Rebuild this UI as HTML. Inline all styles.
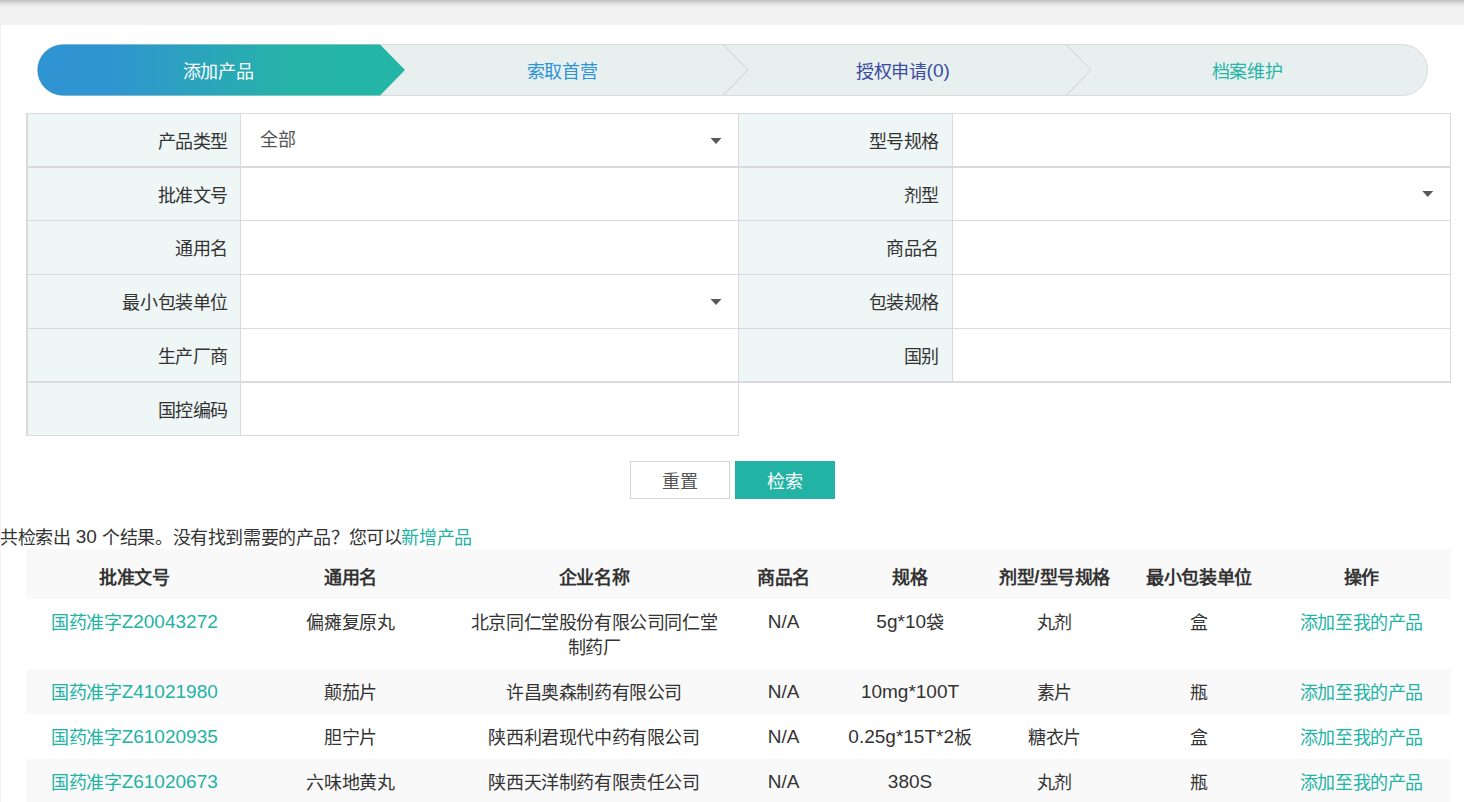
<!DOCTYPE html>
<html lang="zh-CN">
<head>
<meta charset="utf-8">
<style>
*{box-sizing:border-box;margin:0;padding:0}
html,body{width:1464px;height:802px;overflow:hidden}
body{background:#f2f2f2;font-family:"Liberation Sans",sans-serif;color:#333;position:relative;letter-spacing:-0.4px}
.l{letter-spacing:0;font-size:19px;line-height:0;position:relative;top:-1px}
.topshadow{position:absolute;left:0;top:0;width:1464px;height:8px;background:linear-gradient(#c3c3c3 0.5px,#cdcdcd 1.5px,#d7d7d7 2.5px,#e0e0e0 3.5px,#e6e6e6 4.5px,#ececec 5.5px,#efefef 6.5px,#f2f2f2 7.5px)}
.panel{position:absolute;left:1px;top:25px;width:1463px;height:777px;background:#fff}
.abs{position:absolute}
.steps{position:absolute;left:0;top:0}
.st{position:absolute;height:28px;line-height:28px;font-size:18px;text-align:center;white-space:nowrap}
.lbg{position:absolute;background:#eff6f6}
.flab{position:absolute;text-align:right;font-size:18px;color:#333;white-space:nowrap}
.tri{position:absolute;width:0;height:0;border-left:5.5px solid transparent;border-right:5.5px solid transparent;border-top:7px solid #555}
.btn{position:absolute;top:461px;width:100px;height:38px;text-align:center;font-size:18px}
.txt{position:absolute;white-space:nowrap}
.th{position:absolute;text-align:center;font-size:18px;font-weight:bold;line-height:26px;color:#333;white-space:nowrap}
.td{position:absolute;text-align:center;font-size:18px;line-height:25px;color:#333;white-space:nowrap}
.link{color:#22b3a5}
</style>
</head>
<body>
<div class="topshadow"></div>
<div class="panel"></div>
<svg class="steps" width="1464" height="110" viewBox="0 0 1464 110">
  <defs>
    <linearGradient id="g1" gradientUnits="userSpaceOnUse" x1="37" x2="405" y1="0" y2="0">
      <stop offset="0" stop-color="#2f94d2"/>
      <stop offset="0.2" stop-color="#2f95d0"/>
      <stop offset="0.7" stop-color="#25b4a7"/>
      <stop offset="1" stop-color="#24b5a6"/>
    </linearGradient>
  </defs>
  <rect x="37.5" y="44.5" width="1390" height="51" rx="25.5" ry="25.5" fill="#e7f0ef" stroke="#dcdada" stroke-width="1"/>
  <path d="M63,44.5 H380 L405,70 L380,95.5 H63 A25.5,25.5 0 0 1 63,44.5 Z" fill="url(#g1)"/>
  <polyline points="723,44.5 748,70 723,95.5" fill="none" stroke="#dcdada" stroke-width="1.2"/>
  <polyline points="1066,44.5 1091,70 1066,95.5" fill="none" stroke="#dcdada" stroke-width="1.2"/>
</svg>

<div class="st" style="left:168px;top:58px;width:100px;color:#fff">添加产品</div>
<div class="st" style="left:512px;top:58px;width:100px;color:#2e94d6">索取首营</div>
<div class="st" style="left:843px;top:58px;width:120px;color:#3c4aa0">授权申请<span class="l">(0)</span></div>
<div class="st" style="left:1197px;top:58px;width:100px;color:#26b5a5">档案维护</div>
<div class="lbg" style="left:27px;top:113px;width:213px;height:53px"></div>
<div class="lbg" style="left:738px;top:113px;width:214px;height:53px"></div>
<div class="lbg" style="left:27px;top:167px;width:213px;height:53px"></div>
<div class="lbg" style="left:738px;top:167px;width:214px;height:53px"></div>
<div class="lbg" style="left:27px;top:220px;width:213px;height:54px"></div>
<div class="lbg" style="left:738px;top:220px;width:214px;height:54px"></div>
<div class="lbg" style="left:27px;top:274px;width:213px;height:54px"></div>
<div class="lbg" style="left:738px;top:274px;width:214px;height:54px"></div>
<div class="lbg" style="left:27px;top:328px;width:213px;height:53px"></div>
<div class="lbg" style="left:738px;top:328px;width:214px;height:53px"></div>
<div class="lbg" style="left:27px;top:382px;width:213px;height:53px"></div>
<div class="abs" style="left:26px;top:113px;width:1425px;height:1px;background:#dadada"></div>
<div class="abs" style="left:26px;top:166px;width:1425px;height:1px;background:#dadada"></div>
<div class="abs" style="left:26px;top:167px;width:1425px;height:1px;background:#dadada"></div>
<div class="abs" style="left:26px;top:220px;width:1425px;height:1px;background:#dadada"></div>
<div class="abs" style="left:26px;top:274px;width:1425px;height:1px;background:#dadada"></div>
<div class="abs" style="left:26px;top:328px;width:1425px;height:1px;background:#dadada"></div>
<div class="abs" style="left:26px;top:381px;width:1425px;height:1px;background:#dadada"></div>
<div class="abs" style="left:26px;top:382px;width:1425px;height:1px;background:#dadada"></div>
<div class="abs" style="left:26px;top:435px;width:713px;height:1px;background:#dadada"></div>
<div class="abs" style="left:26px;top:113px;width:1px;height:323px;background:#dadada"></div>
<div class="abs" style="left:27px;top:113px;width:1px;height:323px;background:#dadada"></div>
<div class="abs" style="left:240px;top:113px;width:1px;height:323px;background:#dadada"></div>
<div class="abs" style="left:738px;top:113px;width:1px;height:323px;background:#dadada"></div>
<div class="abs" style="left:952px;top:113px;width:1px;height:269px;background:#dadada"></div>
<div class="abs" style="left:1450px;top:113px;width:1px;height:270px;background:#dadada"></div>
<div class="flab" style="left:28px;top:116px;width:200px;height:52px;line-height:52px">产品类型</div>
<div class="flab" style="left:739px;top:116px;width:200px;height:52px;line-height:52px">型号规格</div>
<div class="flab" style="left:28px;top:170px;width:200px;height:52px;line-height:52px">批准文号</div>
<div class="flab" style="left:739px;top:170px;width:200px;height:52px;line-height:52px">剂型</div>
<div class="flab" style="left:28px;top:223px;width:200px;height:53px;line-height:53px">通用名</div>
<div class="flab" style="left:739px;top:223px;width:200px;height:53px;line-height:53px">商品名</div>
<div class="flab" style="left:28px;top:277px;width:200px;height:53px;line-height:53px">最小包装单位</div>
<div class="flab" style="left:739px;top:277px;width:200px;height:53px;line-height:53px">包装规格</div>
<div class="flab" style="left:28px;top:331px;width:200px;height:52px;line-height:52px">生产厂商</div>
<div class="flab" style="left:739px;top:331px;width:200px;height:52px;line-height:52px">国别</div>
<div class="flab" style="left:28px;top:385px;width:200px;height:52px;line-height:52px">国控编码</div>
<div class="flab" style="left:260px;top:114px;width:200px;height:52px;line-height:52px;text-align:left;color:#555">全部</div>
<svg class="abs" style="left:0;top:0" width="1464" height="320"><polygon points="710.5,138 721.5,138 716,144" fill="#595959"/><polygon points="1422.3,191 1433.3,191 1427.8,197" fill="#595959"/><polygon points="710.5,299 721.5,299 716,305" fill="#595959"/></svg>
<div class="btn" style="left:630px;border:1px solid #d5d5d5;background:#fff;color:#555;line-height:41px">重置</div>
<div class="btn" style="left:735px;background:#22b3a5;color:#fff;line-height:43px">检索</div>
<div class="txt" style="left:0;top:525px;font-size:18px;line-height:26px;color:#333">共检索出<span class="l"> 30 </span>个结果。没有找到需要的产品？您可以<span style="color:#22b3a5">新增产品</span></div>
<div class="abs" style="left:26px;top:549px;width:1425px;height:50px;background:#f9f9f9"></div>
<div class="abs" style="left:26px;top:669px;width:1425px;height:45px;background:#f9f9f9"></div>
<div class="abs" style="left:26px;top:759px;width:1425px;height:45px;background:#f9f9f9"></div>
<div class="th" style="left:26px;top:565px;width:217px">批准文号</div>
<div class="th" style="left:243px;top:565px;width:215px">通用名</div>
<div class="th" style="left:458px;top:565px;width:272px">企业名称</div>
<div class="th" style="left:730px;top:565px;width:107px">商品名</div>
<div class="th" style="left:837px;top:565px;width:146px">规格</div>
<div class="th" style="left:983px;top:565px;width:143px">剂型<span class="l">/</span>型号规格</div>
<div class="th" style="left:1126px;top:565px;width:146px">最小包装单位</div>
<div class="th" style="left:1272px;top:565px;width:179px">操作</div>
<div class="td link" style="left:26px;top:611px;width:217px">国药准字<span class="l">Z20043272</span></div>
<div class="td" style="left:243px;top:611px;width:215px">偏瘫复原丸</div>
<div class="td" style="left:458px;top:611px;width:272px">北京同仁堂股份有限公司同仁堂<br>制药厂</div>
<div class="td" style="left:730px;top:611px;width:107px"><span class="l">N/A</span></div>
<div class="td" style="left:837px;top:611px;width:146px"><span class="l">5g*10</span>袋</div>
<div class="td" style="left:983px;top:611px;width:143px">丸剂</div>
<div class="td" style="left:1126px;top:611px;width:146px">盒</div>
<div class="td link" style="left:1272px;top:611px;width:179px">添加至我的产品</div>
<div class="td link" style="left:26px;top:681px;width:217px">国药准字<span class="l">Z41021980</span></div>
<div class="td" style="left:243px;top:681px;width:215px">颠茄片</div>
<div class="td" style="left:458px;top:681px;width:272px">许昌奥森制药有限公司</div>
<div class="td" style="left:730px;top:681px;width:107px"><span class="l">N/A</span></div>
<div class="td" style="left:837px;top:681px;width:146px"><span class="l">10mg*100T</span></div>
<div class="td" style="left:983px;top:681px;width:143px">素片</div>
<div class="td" style="left:1126px;top:681px;width:146px">瓶</div>
<div class="td link" style="left:1272px;top:681px;width:179px">添加至我的产品</div>
<div class="td link" style="left:26px;top:726px;width:217px">国药准字<span class="l">Z61020935</span></div>
<div class="td" style="left:243px;top:726px;width:215px">胆宁片</div>
<div class="td" style="left:458px;top:726px;width:272px">陕西利君现代中药有限公司</div>
<div class="td" style="left:730px;top:726px;width:107px"><span class="l">N/A</span></div>
<div class="td" style="left:837px;top:726px;width:146px"><span class="l">0.25g*15T*2</span>板</div>
<div class="td" style="left:983px;top:726px;width:143px">糖衣片</div>
<div class="td" style="left:1126px;top:726px;width:146px">盒</div>
<div class="td link" style="left:1272px;top:726px;width:179px">添加至我的产品</div>
<div class="td link" style="left:26px;top:771px;width:217px">国药准字<span class="l">Z61020673</span></div>
<div class="td" style="left:243px;top:771px;width:215px">六味地黄丸</div>
<div class="td" style="left:458px;top:771px;width:272px">陕西天洋制药有限责任公司</div>
<div class="td" style="left:730px;top:771px;width:107px"><span class="l">N/A</span></div>
<div class="td" style="left:837px;top:771px;width:146px"><span class="l">380S</span></div>
<div class="td" style="left:983px;top:771px;width:143px">丸剂</div>
<div class="td" style="left:1126px;top:771px;width:146px">瓶</div>
<div class="td link" style="left:1272px;top:771px;width:179px">添加至我的产品</div>
</body>
</html>
